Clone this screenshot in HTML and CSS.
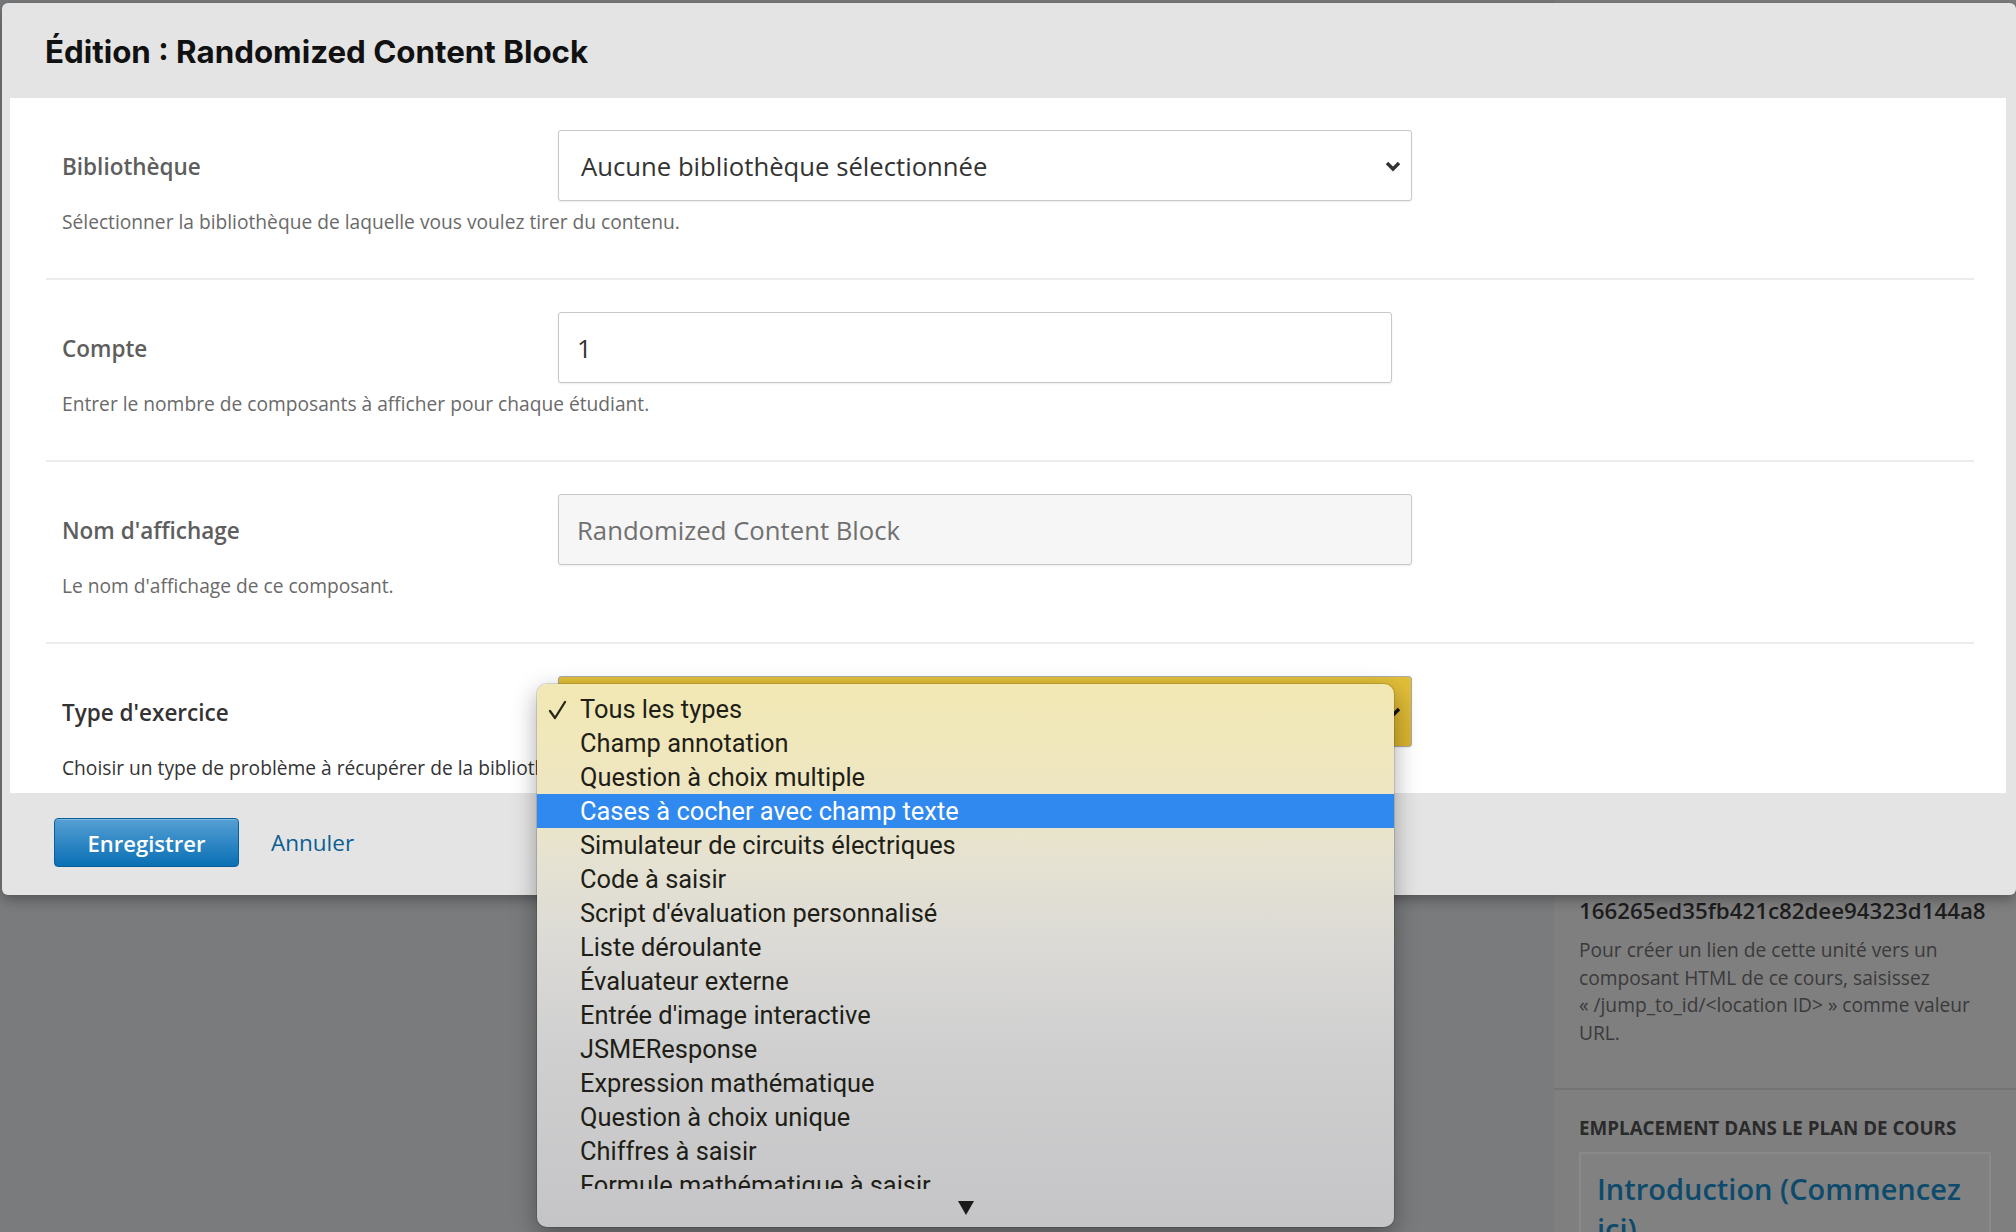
FILE: index.html
```html
<!DOCTYPE html>
<html lang="fr">
<head>
<meta charset="utf-8">
<title>Édition : Randomized Content Block</title>
<link rel="stylesheet" href="styles.css">
</head>
<body>
<div class="page">
  <div class="topbar"><div class="tb-left"></div><div class="tb-right"></div></div>
  <div class="main">
    <div class="content"></div>
    <aside class="sidebar">
      <section class="sb-section sb-location">
        <div class="loc-id">166265ed35fb421c82dee94323d144a8</div>
        <p class="loc-help">Pour créer un lien de cette unité vers un<br>composant HTML de ce cours, saisissez<br>« /jump_to_id/&lt;location ID&gt; » comme valeur<br>URL.</p>
      </section>
      <section class="sb-section sb-outline">
        <h3 class="sb-title">EMPLACEMENT DANS LE PLAN DE COURS</h3>
        <div class="outline-box"><span class="outline-link">Introduction (Commencez ici)</span></div>
      </section>
    </aside>
  </div>
</div>

<div class="modal">
  <header class="modal-header">
    <h2 class="modal-title">Édition : Randomized Content Block</h2>
  </header>
  <div class="modal-body">
    <div class="field">
      <div class="field-line">
        <label class="field-label">Bibliothèque</label>
        <div class="control select">
          <span class="control-text">Aucune bibliothèque sélectionnée</span>
          <svg class="chev" width="16" height="11" viewBox="0 0 16 11"><polyline points="2,2 8,8 14,2" fill="none" stroke="#333" stroke-width="3.4"/></svg>
        </div>
      </div>
      <p class="field-help">Sélectionner la bibliothèque de laquelle vous voulez tirer du contenu.</p>
    </div>
    <div class="field">
      <div class="field-line">
        <label class="field-label">Compte</label>
        <div class="control input narrow"><span class="control-text">1</span></div>
      </div>
      <p class="field-help">Entrer le nombre de composants à afficher pour chaque étudiant.</p>
    </div>
    <div class="field">
      <div class="field-line">
        <label class="field-label">Nom d'affichage</label>
        <div class="control input muted"><span class="control-text">Randomized Content Block</span></div>
      </div>
      <p class="field-help">Le nom d'affichage de ce composant.</p>
    </div>
    <div class="field active">
      <div class="field-line">
        <label class="field-label">Type d'exercice</label>
        <div class="control select yellow">
          <svg class="chev" width="16" height="11" viewBox="0 0 16 11"><polyline points="2,2 8,8 14,2" fill="none" stroke="#111" stroke-width="3.4"/></svg>
          <div class="menu">
            <ul class="menu-list">
              <li class="menu-item checked"><svg class="check" width="20" height="20" viewBox="0 0 20 20"><polyline points="2,11 7,18 17,2" fill="none" stroke="#2a2719" stroke-width="2.3" stroke-linecap="round" stroke-linejoin="round"/></svg>Tous les types</li>
              <li class="menu-item">Champ annotation</li>
              <li class="menu-item">Question à choix multiple</li>
              <li class="menu-item hl">Cases à cocher avec champ texte</li>
              <li class="menu-item">Simulateur de circuits électriques</li>
              <li class="menu-item">Code à saisir</li>
              <li class="menu-item">Script d'évaluation personnalisé</li>
              <li class="menu-item">Liste déroulante</li>
              <li class="menu-item">Évaluateur externe</li>
              <li class="menu-item">Entrée d'image interactive</li>
              <li class="menu-item">JSMEResponse</li>
              <li class="menu-item">Expression mathématique</li>
              <li class="menu-item">Question à choix unique</li>
              <li class="menu-item">Chiffres à saisir</li>
              <li class="menu-item">Formule mathématique à saisir</li>
            </ul>
            <div class="menu-scroll"><svg width="18" height="16" viewBox="0 0 18 16"><polygon points="1,1 17,1 9,15" fill="#1a1a1a"/></svg></div>
          </div>
        </div>
      </div>
      <p class="field-help">Choisir un type de problème à récupérer de la bibliothèque.</p>
    </div>
  </div>
  <footer class="modal-footer">
    <button class="btn-save">Enregistrer</button>
    <a class="btn-cancel">Annuler</a>
  </footer>
</div>
</body>
</html>
```

FILE: styles.css
```css
* { box-sizing: border-box; }
html, body { margin: 0; padding: 0; }
body {
  width: 2016px;
  height: 1232px;
  overflow: hidden;
  background: #7a7b7d;
  font-family: "Open Sans", "Noto Sans", sans-serif;
  position: relative;
}

/* background page (dimmed) */
.page { display: flex; flex-direction: column; height: 1232px; }
.topbar { display: flex; height: 3px; }
.tb-left { flex: 1; background: #505154; }
.tb-right { width: 462px; background: #6e665f; }
.main { display: flex; flex: 1; }
.content { flex: 1; background: #7a7b7d; }
.sidebar { width: 462px; background: #7f7f80; padding-top: 896px; }
.sb-section { padding: 0 25px; }
.sb-location { padding-bottom: 42px; }
.loc-id { font-size: 22.3px; font-weight: 600; line-height: 30px; color: #1d1d1d; }
.loc-help { margin: 10px 0 0; font-size: 19.2px; line-height: 27.5px; color: #3a3a3a; }
.sb-outline { border-top: 2px solid #737374; padding-top: 25px; }
.sb-title { margin: 0 0 11px; font-size: 18.8px; font-weight: 700; line-height: 26px; color: #2a2a2a; }
.outline-box { border: 2px solid #8a8a8b; background: #818182; padding: 15px 16px; }
.outline-link { font-size: 29px; font-weight: 600; line-height: 40px; color: #0d4a6c; }

/* modal */
.modal {
  position: absolute;
  left: 2px; top: 3px;
  width: 2014px; height: 892px;
  background: #e4e4e4;
  border-radius: 6px;
  box-shadow: 0 4px 14px rgba(0,0,0,0.35);
  display: flex; flex-direction: column;
}
.modal-header { height: 95px; display: flex; align-items: center; padding-left: 43px; padding-top: 2px; }
.modal-title {
  margin: 0;
  font-family: "Inter", "Open Sans", sans-serif;
  font-weight: 700;
  font-size: 31.3px;
  color: #111;
}
.modal-body {
  margin: 0 10px 0 8px;
  height: 695px;
  background: #fff;
  padding: 0 32px 0 36px;
  overflow: visible;
}
.field { padding: 32px 0 43px 16px; border-bottom: 2px solid #ececec; }
.field.active { border-bottom: none; padding-bottom: 12px; }
.field-line { display: flex; align-items: center; }
.field-label {
  width: 496px;
  flex: none;
  font-size: 22.5px;
  font-weight: 600;
  color: #5e5e5e;
  padding-top: 2px;
}
.field.active .field-label { color: #333; }
.field-help { margin: 8px 0 0; font-size: 19.2px; line-height: 26px; color: #6a6a6a; }
.field.active .field-help { color: #333; }

.control {
  position: relative;
  width: 854px; height: 71px;
  border: 1px solid #c8c8c8;
  border-radius: 3px;
  display: flex; align-items: center;
  background: #fff;
  font-size: 25.7px;
  color: #333;
  padding-top: 2px;
  box-shadow: 0 1px 2px rgba(0,0,0,0.08);
}
.control.select { padding-left: 22px; }
.control.input { padding-left: 18px; }
.control.narrow { width: 834px; }
.control.muted { background: #f6f6f6; color: #707070; }
.chev { position: absolute; right: 10px; top: 30px; }
.control.yellow {
  background: linear-gradient(#e2bf3a, #d8b22e);
  border-color: #a9a9a9;
}

/* native popup menu */
.menu {
  position: absolute;
  left: -22px; top: 7px;
  width: 857px; height: 543px;
  border-radius: 10px;
  background: linear-gradient(#f2e8b4 0%, #eee6c2 20%, #e5e2d2 33%, #dbdad6 48%, #cfcfd0 68%, #c5c5c7 100%);
  box-shadow: 0 0 0 1px rgba(0,0,0,0.12), 0 8px 24px rgba(0,0,0,0.35);
  padding-top: 8px;
  z-index: 5;
}
.menu-list {
  list-style: none;
  margin: 0; padding: 0;
  height: 497px;
  overflow: hidden;
}
.menu-item {
  position: relative;
  height: 34px;
  line-height: 34px;
  padding-left: 43px;
  font-family: "Roboto", "Liberation Sans", sans-serif;
  font-size: 25.4px;
  color: #201e16;
  white-space: nowrap;
}
.menu-item.hl { background: #2f89ef; color: #fff; }
.check { position: absolute; left: 11px; top: 8px; }
.menu-scroll { height: 38px; display: flex; justify-content: center; align-items: center; padding-left: 1px; }

/* footer */
.modal-footer { flex: 1; display: flex; align-items: flex-start; padding: 25px 0 0 52px; }
.btn-save {
  width: 185px; height: 49px;
  border: 1px solid #0a5e99;
  border-radius: 4px;
  background: linear-gradient(#559fd4, #0a70b4);
  color: #fff;
  font-family: "Open Sans", sans-serif;
  font-size: 22px;
  font-weight: 600;
  padding: 0;
  box-shadow: inset 0 1px 0 rgba(255,255,255,0.25);
}
.btn-cancel {
  margin-left: 32px;
  line-height: 49px;
  font-size: 22.5px;
  color: #0b5e92;
}
```
